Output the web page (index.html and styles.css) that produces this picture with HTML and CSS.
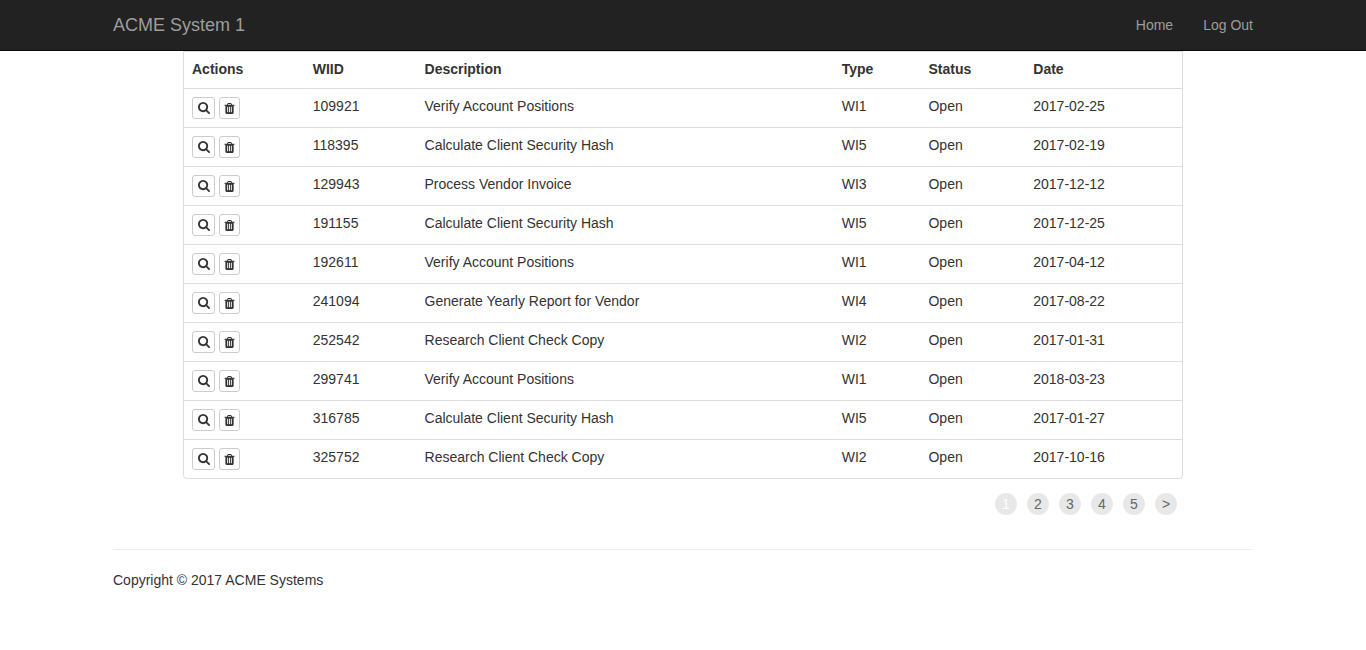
FILE: index.html
```html
<!DOCTYPE html>
<html lang="en">
<head>
<meta charset="utf-8">
<meta name="viewport" content="width=device-width, initial-scale=1">
<title>ACME System 1 - Work Items</title>
<link rel="stylesheet" href="styles.css">
</head>
<body>
<svg class="sprite" aria-hidden="true">
  <symbol id="icon-search" viewBox="0 128 1664 1664"><path d="M1152 832q0-185-131.5-316.5t-316.5-131.5-316.5 131.5-131.5 316.5 131.5 316.5 316.5 131.5 316.5-131.5 131.5-316.5zm512 832q0 52-38 90t-90 38q-54 0-90-38l-343-342q-179 124-399 124-143 0-273.5-55.5t-225-150-150-225-55.5-273.5 55.5-273.5 150-225 225-150 273.5-55.5 273.5 55.5 225 150 150 225 55.5 273.5q0 220-124 399l343 343q37 37 37 90z"/></symbol>
  <symbol id="icon-trash" viewBox="0 128 1408 1536"><path d="M512 1376v-704q0-14-9-23t-23-9h-64q-14 0-23 9t-9 23v704q0 14 9 23t23 9h64q14 0 23-9t9-23zm256 0v-704q0-14-9-23t-23-9h-64q-14 0-23 9t-9 23v704q0 14 9 23t23 9h64q14 0 23-9t9-23zm256 0v-704q0-14-9-23t-23-9h-64q-14 0-23 9t-9 23v704q0 14 9 23t23 9h64q14 0 23-9t9-23zm-544-992h448l-48-117q-7-9-17-11h-317q-10 2-17 11zm928 32v64q0 14-9 23t-23 9h-96v948q0 83-47 143.5t-113 60.5h-832q-66 0-113-58.5t-47-141.5v-952h-96q-14 0-23-9t-9-23v-64q0-14 9-23t23-9h309l70-167q15-37 54-63t79-26h320q40 0 79 26t54 63l70 167h309q14 0 23 9t9 23z"/></symbol>
</svg>
<header class="navbar">
  <div class="container navbar-inner">
    <a class="brand" href="#">ACME System 1</a>
    <nav class="nav-links">
      <a href="#">Home</a>
      <a href="#">Log Out</a>
    </nav>
  </div>
</header>
<div class="container">
  <main class="content">
    <div class="panel">
      <table class="items">
        <thead>
          <tr><th class="col-actions">Actions</th><th class="col-wiid">WIID</th><th class="col-desc">Description</th><th class="col-type">Type</th><th class="col-status">Status</th><th class="col-date">Date</th></tr>
        </thead>
        <tbody>
          <tr><td><div class="actions"><button class="btn btn-view" type="button" aria-label="View"><svg class="icon"><use href="#icon-search"/></svg></button><button class="btn btn-delete" type="button" aria-label="Delete"><svg class="icon"><use href="#icon-trash"/></svg></button></div></td><td>109921</td><td>Verify Account Positions</td><td>WI1</td><td>Open</td><td>2017-02-25</td></tr>
          <tr><td><div class="actions"><button class="btn btn-view" type="button" aria-label="View"><svg class="icon"><use href="#icon-search"/></svg></button><button class="btn btn-delete" type="button" aria-label="Delete"><svg class="icon"><use href="#icon-trash"/></svg></button></div></td><td>118395</td><td>Calculate Client Security Hash</td><td>WI5</td><td>Open</td><td>2017-02-19</td></tr>
          <tr><td><div class="actions"><button class="btn btn-view" type="button" aria-label="View"><svg class="icon"><use href="#icon-search"/></svg></button><button class="btn btn-delete" type="button" aria-label="Delete"><svg class="icon"><use href="#icon-trash"/></svg></button></div></td><td>129943</td><td>Process Vendor Invoice</td><td>WI3</td><td>Open</td><td>2017-12-12</td></tr>
          <tr><td><div class="actions"><button class="btn btn-view" type="button" aria-label="View"><svg class="icon"><use href="#icon-search"/></svg></button><button class="btn btn-delete" type="button" aria-label="Delete"><svg class="icon"><use href="#icon-trash"/></svg></button></div></td><td>191155</td><td>Calculate Client Security Hash</td><td>WI5</td><td>Open</td><td>2017-12-25</td></tr>
          <tr><td><div class="actions"><button class="btn btn-view" type="button" aria-label="View"><svg class="icon"><use href="#icon-search"/></svg></button><button class="btn btn-delete" type="button" aria-label="Delete"><svg class="icon"><use href="#icon-trash"/></svg></button></div></td><td>192611</td><td>Verify Account Positions</td><td>WI1</td><td>Open</td><td>2017-04-12</td></tr>
          <tr><td><div class="actions"><button class="btn btn-view" type="button" aria-label="View"><svg class="icon"><use href="#icon-search"/></svg></button><button class="btn btn-delete" type="button" aria-label="Delete"><svg class="icon"><use href="#icon-trash"/></svg></button></div></td><td>241094</td><td>Generate Yearly Report for Vendor</td><td>WI4</td><td>Open</td><td>2017-08-22</td></tr>
          <tr><td><div class="actions"><button class="btn btn-view" type="button" aria-label="View"><svg class="icon"><use href="#icon-search"/></svg></button><button class="btn btn-delete" type="button" aria-label="Delete"><svg class="icon"><use href="#icon-trash"/></svg></button></div></td><td>252542</td><td>Research Client Check Copy</td><td>WI2</td><td>Open</td><td>2017-01-31</td></tr>
          <tr><td><div class="actions"><button class="btn btn-view" type="button" aria-label="View"><svg class="icon"><use href="#icon-search"/></svg></button><button class="btn btn-delete" type="button" aria-label="Delete"><svg class="icon"><use href="#icon-trash"/></svg></button></div></td><td>299741</td><td>Verify Account Positions</td><td>WI1</td><td>Open</td><td>2018-03-23</td></tr>
          <tr><td><div class="actions"><button class="btn btn-view" type="button" aria-label="View"><svg class="icon"><use href="#icon-search"/></svg></button><button class="btn btn-delete" type="button" aria-label="Delete"><svg class="icon"><use href="#icon-trash"/></svg></button></div></td><td>316785</td><td>Calculate Client Security Hash</td><td>WI5</td><td>Open</td><td>2017-01-27</td></tr>
          <tr><td><div class="actions"><button class="btn btn-view" type="button" aria-label="View"><svg class="icon"><use href="#icon-search"/></svg></button><button class="btn btn-delete" type="button" aria-label="Delete"><svg class="icon"><use href="#icon-trash"/></svg></button></div></td><td>325752</td><td>Research Client Check Copy</td><td>WI2</td><td>Open</td><td>2017-10-16</td></tr>
        </tbody>
      </table>
    </div>
    <nav class="pager" aria-label="Pages">
      <a class="page current" href="#" aria-current="page">1</a>
      <a class="page" href="#">2</a>
      <a class="page" href="#">3</a>
      <a class="page" href="#">4</a>
      <a class="page" href="#">5</a>
      <a class="page" href="#">&gt;</a>
    </nav>
  </main>
  <footer class="footer">
    <p class="copyright">Copyright © 2017 ACME Systems</p>
  </footer>
</div>
</body>
</html>
```

FILE: styles.css
```css
* {
  box-sizing: border-box;
}

body {
  margin: 0;
  background: #fff;
  color: #333;
  font-family: "Liberation Sans", Arial, sans-serif;
  font-size: 14px;
  line-height: 20px;
}

a {
  text-decoration: none;
}

.sprite {
  display: none;
}

.container {
  max-width: 1170px;
  margin: 0 auto;
  padding: 0 15px;
}

.navbar {
  background: #222;
  border-bottom: 1px solid #080808;
}

.navbar-inner {
  display: flex;
  align-items: center;
  justify-content: space-between;
  min-height: 50px;
}

.brand {
  color: #9d9d9d;
  font-size: 18px;
}

.nav-links {
  display: flex;
  gap: 30px;
}

.nav-links a {
  color: #9d9d9d;
}

.content {
  max-width: 1000px;
  margin: 0 auto;
}

.panel {
  border: 1px solid #ddd;
  border-radius: 0 0 4px 4px;
}

.items {
  width: 100%;
  border-spacing: 0;
  table-layout: fixed;
}

.items th,
.items td {
  padding: 8px;
  text-align: left;
  vertical-align: top;
}

.items th {
  padding: 7px 8px 9px;
}

.items td {
  border-top: 1px solid #ddd;
}

.items td:not(:first-child) {
  padding-top: 7px;
}

.col-actions { width: 12.1%; }
.col-wiid { width: 11.2%; }
.col-desc { width: 41.8%; }
.col-type { width: 8.7%; }
.col-status { width: 10.5%; }

.actions {
  display: flex;
  gap: 4px;
}

.btn {
  display: flex;
  align-items: center;
  justify-content: center;
  height: 22px;
  padding: 0;
  border: 1px solid #ccc;
  border-radius: 3px;
  background: #fff;
  color: #333;
}

.btn-view {
  width: 23px;
}

.btn-delete {
  width: 21px;
}

.icon {
  width: 12px;
  height: 12px;
  fill: currentColor;
}

.btn-delete .icon {
  width: 11px;
  height: 11px;
}

.pager {
  display: flex;
  justify-content: flex-end;
  gap: 10px;
  padding: 14px 6px 0 0;
}

.page {
  width: 22px;
  border-radius: 50%;
  background: #e8e8e8;
  color: #666;
  line-height: 22px;
  text-align: center;
}

.page.current {
  color: #fff;
}

.footer {
  margin-top: 34px;
  border-top: 1px solid #eee;
}

.copyright {
  margin: 20px 0 10px;
}
```
